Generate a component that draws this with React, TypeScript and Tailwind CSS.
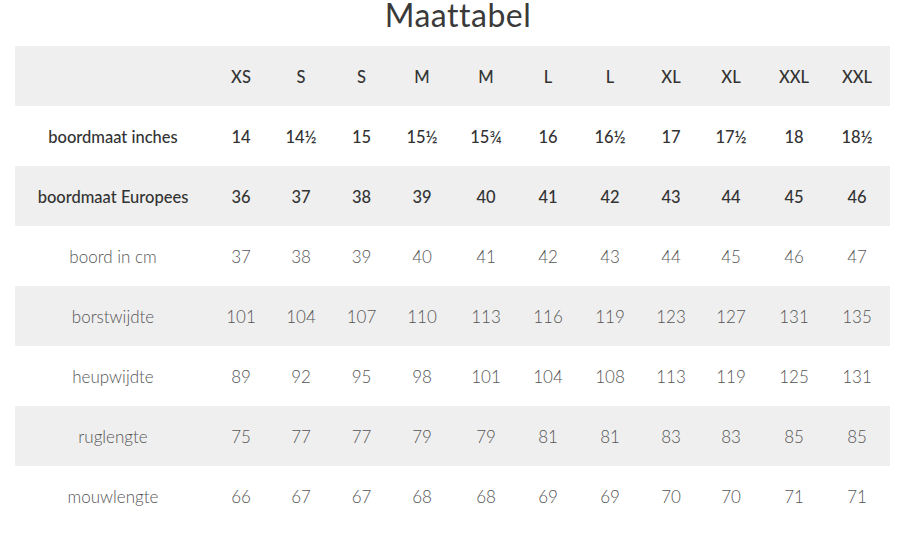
import React from "react";

const widths = [196, 60, 60, 61, 60, 68, 56, 68, 54, 66, 60, 66];

type Row = { label: string; values: string[]; bold: boolean; shaded: boolean };

const rows: Row[] = [
  { label: "", values: ["XS", "S", "S", "M", "M", "L", "L", "XL", "XL", "XXL", "XXL"], bold: true, shaded: true },
  { label: "boordmaat inches", values: ["14", "14½", "15", "15½", "15¾", "16", "16½", "17", "17½", "18", "18½"], bold: true, shaded: false },
  { label: "boordmaat Europees", values: ["36", "37", "38", "39", "40", "41", "42", "43", "44", "45", "46"], bold: true, shaded: true },
  { label: "boord in cm", values: ["37", "38", "39", "40", "41", "42", "43", "44", "45", "46", "47"], bold: false, shaded: false },
  { label: "borstwijdte", values: ["101", "104", "107", "110", "113", "116", "119", "123", "127", "131", "135"], bold: false, shaded: true },
  { label: "heupwijdte", values: ["89", "92", "95", "98", "101", "104", "108", "113", "119", "125", "131"], bold: false, shaded: false },
  { label: "ruglengte", values: ["75", "77", "77", "79", "79", "81", "81", "83", "83", "85", "85"], bold: false, shaded: true },
  { label: "mouwlengte", values: ["66", "67", "67", "68", "68", "69", "69", "70", "70", "71", "71"], bold: false, shaded: false },
];

export default function App() {
  return (
    <div className="w-[916px] h-[536px] bg-white overflow-hidden" style={{ fontFamily: "Lato, 'Open Sans', sans-serif" }}>
      <div className="h-[46px] flex justify-center">
        <h1 className="text-[32px] leading-[36px] -mt-[3px] text-[#3a3a3a] font-normal tracking-[0.5px]">Maattabel</h1>
      </div>
      <div className="px-[15px]">
        <table className="table-fixed border-collapse w-[875px]">
          <colgroup>
            {widths.map((w, i) => (
              <col key={i} style={{ width: w }} />
            ))}
          </colgroup>
          <tbody>
            {rows.map((r, ri) => (
              <tr key={ri} className={`h-[60px] ${r.shaded ? "bg-[#efefef]" : "bg-white"}`}>
                <td
                  className={`p-0 pt-[2px] text-center ${
                    r.bold ? "text-[16.5px] font-medium text-[#333333]" : "text-[17px] font-light text-[#555555]"
                  }`}
                >
                  {r.label}
                </td>
                {r.values.map((v, vi) => (
                  <td
                    key={vi}
                    className={`p-0 pt-[2px] text-center ${
                      r.bold ? "text-[16.5px] font-medium text-[#333333]" : "text-[17px] font-light text-[#555555]"
                    }`}
                  >
                    {v}
                  </td>
                ))}
              </tr>
            ))}
          </tbody>
        </table>
      </div>
    </div>
  );
}
